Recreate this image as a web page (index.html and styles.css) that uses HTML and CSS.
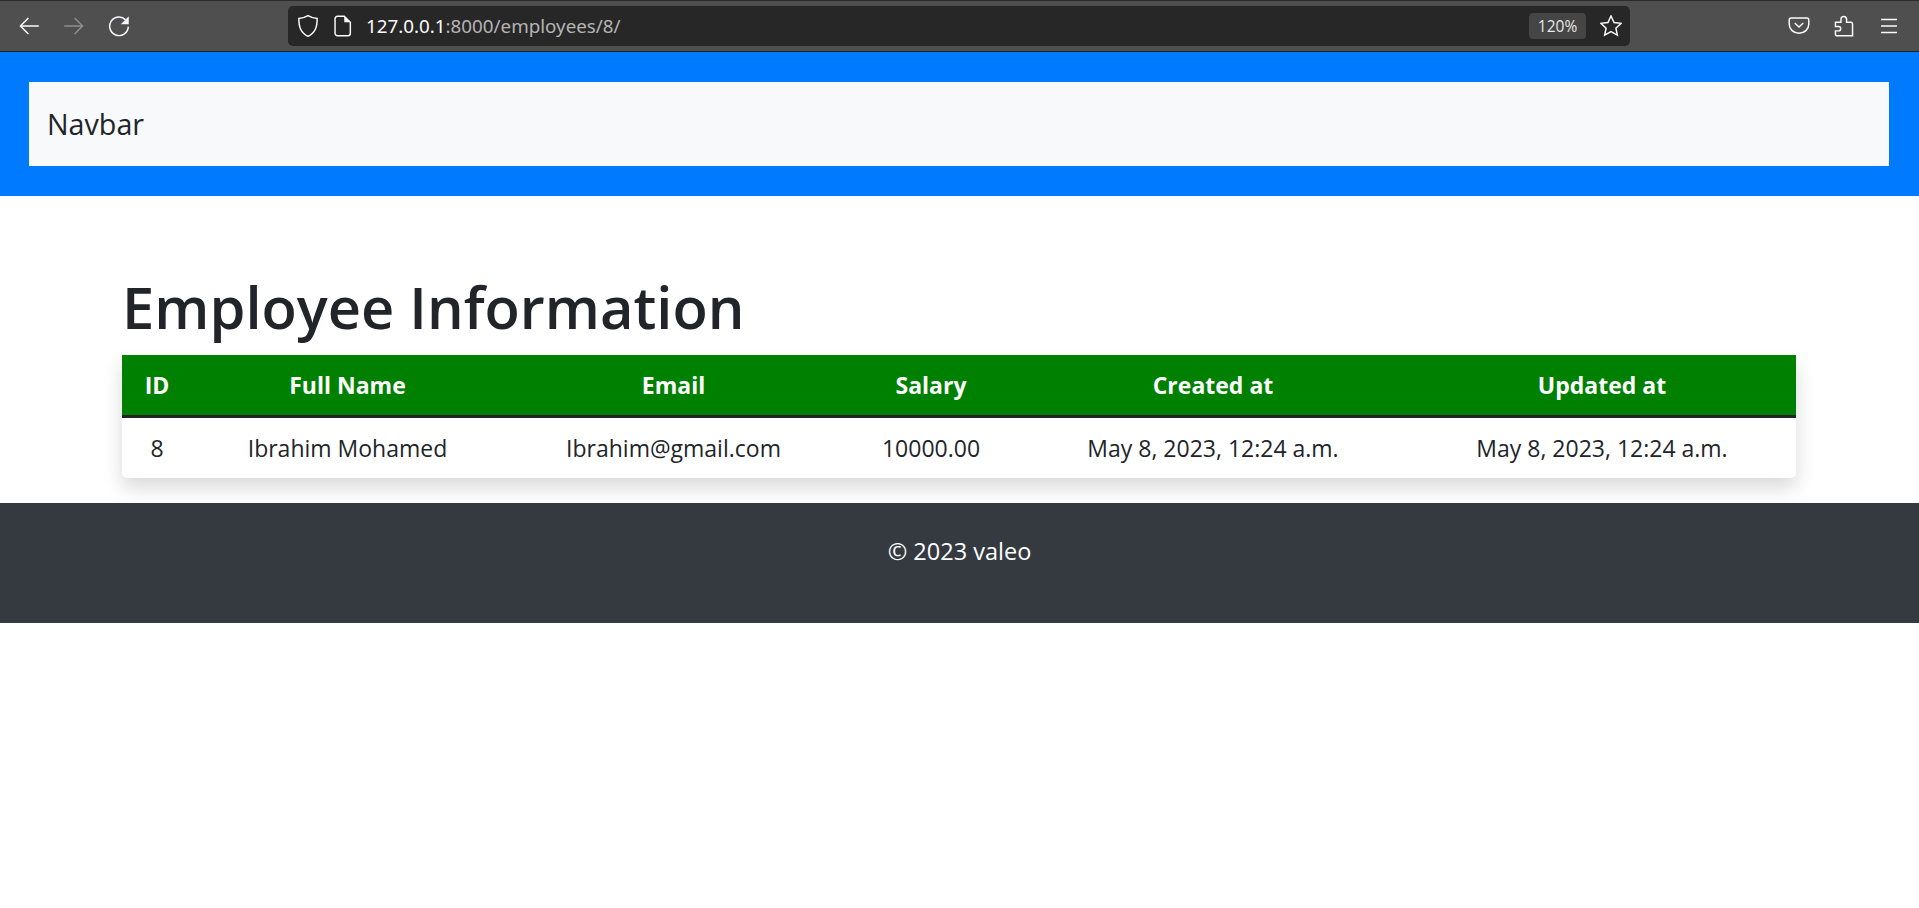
FILE: index.html
```html
<!DOCTYPE html>
<html>
<head>
    <title>Employee Information</title>
    <link rel="stylesheet" href="styles.css">
</head>
<body>
<div class="toolbar">
    <div class="nav-buttons">
        <svg class="icon" viewBox="1 1 18 18"><path d="M18 10H3M9.500 3.500L3 10l6.500 6.500"/></svg>
        <svg class="icon dim" viewBox="1 1 18 18"><path d="M2 10h15M10.500 3.500L17 10l-6.500 6.500"/></svg>
        <svg class="icon" viewBox="1 1 18 18"><path d="M15.500 5A7.600 7.600 0 1 0 17.600 10.500"/><path class="solid" d="M18 2v6.500h-6.500z"/></svg>
    </div>
    <div class="urlbar">
        <svg class="icon shield" viewBox="1 1 18 18"><path d="M10 1.500c2.500 1.500 5 2.200 7.500 2.300 0 7-1.500 11.700-7.500 14.700C4 15.500 2.500 10.800 2.500 3.800 5 3.700 7.500 3 10 1.500z"/></svg>
        <svg class="icon page" viewBox="1 1 18 18"><path d="M5.500 2H11l5 5v9a2 2 0 0 1-2 2H5.500a2 2 0 0 1-2-2V4a2 2 0 0 1 2-2z"/><path class="solid" d="M11 2l5 5h-5z"/></svg>
        <span class="url"><span class="host">127.0.0.1</span>:8000/employees/8/</span>
        <span class="zoom-pill">120%</span>
        <svg class="icon" viewBox="1 1 18 18"><path d="M10 1.800l2.500 5.300 5.800.7-4.300 4 1.200 5.700-5.200-2.900-5.200 2.900 1.200-5.700-4.300-4 5.800-.7z"/></svg>
    </div>
    <div class="tools">
        <svg class="icon" viewBox="1 1 18 18"><path d="M3.500 3.500h13A1.500 1.500 0 0 1 18 5v3.500a8 7.500 0 0 1-16 0V5a1.500 1.500 0 0 1 1.500-1.500z"/><path d="M6.500 7.500l3.500 3.300 3.500-3.300"/></svg>
        <svg class="icon" viewBox="1 1 18 18"><path d="M3 7h4.500V4.500a2.300 2.300 0 0 1 4.600 0V7h3.400A1.500 1.500 0 0 1 17 8.500v9.500H4a1 1 0 0 1-1-1v-3h2.500a1.800 1.800 0 0 0 0-3.600H3z"/></svg>
        <svg class="icon" viewBox="1 1 18 18"><path d="M3.500 4.700h13M3.500 10h13M3.500 15.300h13"/></svg>
    </div>
</div>

<header class="site-header">
    <nav class="navbar">
        <a class="navbar-brand">Navbar</a>
    </nav>
</header>

<main class="content">
    <h1>Employee Information</h1>
    <table class="info-table">
        <colgroup>
            <col class="col-id">
            <col class="col-name">
            <col class="col-email">
            <col class="col-salary">
            <col class="col-date">
            <col>
        </colgroup>
        <thead>
        <tr>
            <th>ID</th>
            <th>Full Name</th>
            <th>Email</th>
            <th>Salary</th>
            <th>Created at</th>
            <th>Updated at</th>
        </tr>
        </thead>
        <tbody>
        <tr>
            <td>8</td>
            <td>Ibrahim Mohamed</td>
            <td>Ibrahim@gmail.com</td>
            <td>10000.00</td>
            <td>May 8, 2023, 12:24 a.m.</td>
            <td>May 8, 2023, 12:24 a.m.</td>
        </tr>
        </tbody>
    </table>
</main>

<footer class="site-footer">© 2023 valeo</footer>
</body>
</html>
```

FILE: styles.css
```css
body {
    margin: 0;
    background: #fff;
    color: #212529;
    font-family: "Open Sans", "Noto Sans", sans-serif;
}

/* browser chrome */
.toolbar {
    display: flex;
    align-items: center;
    height: 52px;
    box-sizing: border-box;
    padding-left: 18px;
    background: #4f4f4f;
    border-top: 1px solid #2b2b2b;
    border-bottom: 1px solid #1f1f1f;
}

.icon {
    display: block;
    width: 22px;
    height: 22px;
    fill: none;
    stroke: #fbfbfe;
    stroke-width: 1.200;
    flex: none;
}

.icon .solid {
    fill: #fbfbfe;
    stroke: none;
}

.icon.dim {
    stroke: #8f8f8f;
}

.nav-buttons {
    display: flex;
    gap: 23px;
    width: 270px;
}

.urlbar {
    display: flex;
    align-items: center;
    width: 1342px;
    height: 40px;
    box-sizing: border-box;
    padding: 0 8px 0 9px;
    background: #272727;
    border-radius: 5px;
    color: #b5b5b5;
}

.urlbar .shield {
    margin-right: 13px;
}

.urlbar .page {
    margin-right: 12px;
}

.url {
    flex: 1;
    font-family: "Noto Sans", sans-serif;
    font-size: 18.800px;
    white-space: nowrap;
}

.host {
    color: #fbfbfe;
}

.zoom-pill {
    width: 57px;
    height: 26px;
    line-height: 26px;
    text-align: center;
    background: #454545;
    border-radius: 4px;
    color: #e8e8e8;
    font-size: 15.500px;
    margin-right: 14px;
}

.tools {
    display: flex;
    gap: 23px;
    margin-left: 158px;
}

/* page */
.site-header {
    background: #007bff;
    padding: 30px 30px 30px 29px;
}

.navbar {
    display: flex;
    align-items: center;
    height: 84px;
    box-sizing: border-box;
    padding: 0 18px 2px;
    background: #f8f9fa;
}

.navbar-brand {
    font-size: 28.700px;
    color: #212529;
}

.content {
    padding: 76px 123px 25px 122px;
}

h1 {
    margin: 0 0 14px;
    font-size: 57.800px;
    font-weight: 600;
    line-height: 69px;
}

.info-table {
    width: 100%;
    table-layout: fixed;
    border-collapse: separate;
    border-spacing: 0;
    border-radius: 0 0 5px 5px;
    box-shadow: 0 10px 19px rgba(0, 0, 0, .15);
    font-size: 23px;
}

.col-id { width: 70px; }
.col-name { width: 311px; }
.col-email { width: 341px; }
.col-salary { width: 174px; }
.col-date { width: 390px; }

.info-table th {
    height: 63px;
    box-sizing: border-box;
    padding: 0 0 1px;
    background: #008000;
    color: #fff;
    font-weight: 700;
    border-bottom: 3px solid #212529;
}

.info-table td {
    height: 60px;
    box-sizing: border-box;
    padding: 0 0 1px;
    text-align: center;
}

.site-footer {
    height: 120px;
    box-sizing: border-box;
    padding-top: 33px;
    background: #343a40;
    color: #fff;
    font-size: 23.500px;
    line-height: 30px;
    text-align: center;
}
```
